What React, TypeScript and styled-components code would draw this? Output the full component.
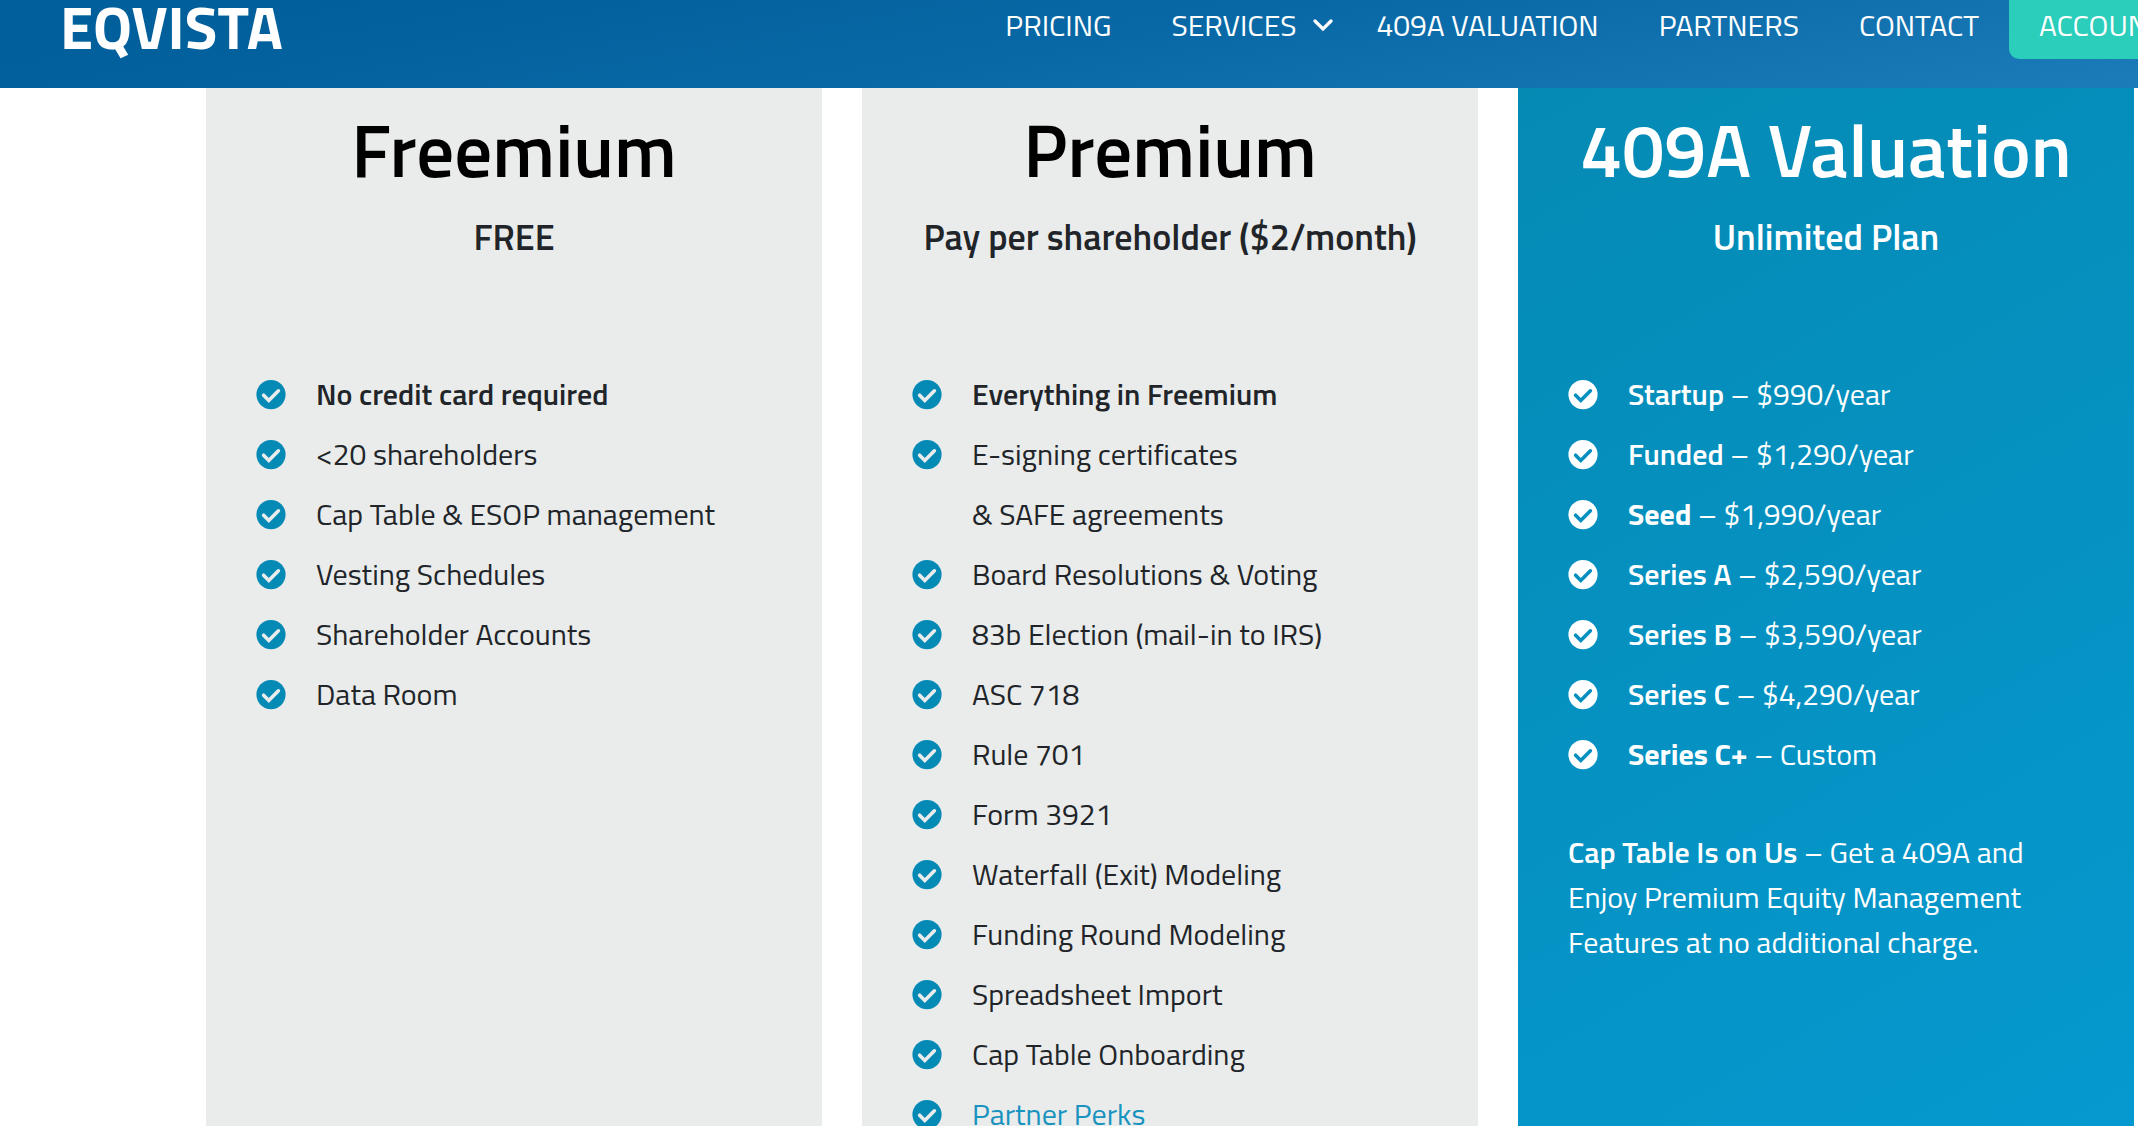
import React from "react";
import styled, { createGlobalStyle } from "styled-components";

const GlobalStyle = createGlobalStyle`
  *, *::before, *::after { box-sizing: border-box; }
  body {
    margin: 0;
    background: #fff;
    color: #212529;
    font-family: "Titillium Web", Lato, "Liberation Sans", sans-serif;
    font-size: 30px;
    line-height: 60px;
  }
  h2, h3, p, ul { margin: 0; padding: 0; }
  a { color: inherit; text-decoration: none; }
  strong { font-weight: 600; }
  b { font-weight: 700; }
`;

const Page = styled.div`
  height: 100vh;
  overflow: hidden;
  display: flex;
  flex-direction: column;
`;

const Header = styled.header`
  flex: none;
  height: 88px;
  padding-left: 60px;
  display: flex;
  justify-content: space-between;
  align-items: flex-start;
  overflow: hidden;
  color: #fff;
  background: linear-gradient(170deg, #015f9b 12%, #0868a5 50%, #1c7cba 100%);
`;

const Logo = styled.a`
  font-size: 60px;
  line-height: 54px;
  font-weight: 700;
`;

const Nav = styled.nav`
  display: flex;
  align-items: flex-start;
  line-height: 50px;
  white-space: nowrap;
`;

const NavLink = styled.a<{ $menu?: boolean }>`
  display: flex;
  align-items: center;
  gap: 17px;
  padding: 0 ${(p) => (p.$menu ? 13 : 30)}px 0 30px;
`;

const AccountLink = styled.a`
  width: 129px;
  height: 59px;
  padding-left: 30px;
  overflow: hidden;
  border-bottom-left-radius: 10px;
  background: #2bcdbb;
`;

const Plans = styled.main`
  flex: 1;
  min-height: 0;
  display: grid;
  grid-template-columns: repeat(3, minmax(0, 1fr));
  gap: 40px;
  padding: 0 4px 0 206px;
`;

const Card = styled.section<{ $featured?: boolean }>`
  padding: 16px 50px 0;
  overflow: hidden;
  color: ${(p) => (p.$featured ? "#fff" : "#212529")};
  background: ${(p) =>
    p.$featured ? "linear-gradient(150deg, #058ab4 0%, #0599cf 100%)" : "#eaeceb"};
  --heading: ${(p) => (p.$featured ? "#fff" : "#000")};
  --icon: ${(p) => (p.$featured ? "#fff" : "#058ab6")};
  --tick: ${(p) => (p.$featured ? "#058fbf" : "#eaeceb")};
`;

const Title = styled.h2`
  color: var(--heading);
  font-size: 75px;
  line-height: 90px;
  font-weight: 600;
  text-align: center;
  white-space: nowrap;
`;

const Price = styled.h3`
  margin: 5px 0 90px;
  font-size: 36px;
  line-height: 75px;
  font-weight: 600;
  text-align: center;
  white-space: nowrap;
`;

const Features = styled.ul`
  list-style: none;
`;

const Feature = styled.li`
  display: flex;
  gap: 30px;
  white-space: nowrap;

  svg { flex: none; margin-top: 16px; }
`;

const PerksLink = styled.a`
  && { color: #1893c0; }
`;

const Note = styled.p`
  margin-top: 46px;
  line-height: 45px;
`;

const Check = () => (
  <svg width="30" height="30" viewBox="0 0 30 30" aria-hidden="true">
    <circle cx="15" cy="14.6" r="14.6" fill="var(--icon)" />
    <path d="M7.6 15.2 12.8 20.4 22.4 10.8" fill="none" stroke="var(--tick)" strokeWidth="3.6" strokeLinecap="round" />
  </svg>
);

const Chevron = () => (
  <svg width="20" height="14" viewBox="0 0 20 14" aria-hidden="true">
    <path d="M2 3 10 11 18 3" fill="none" stroke="#fff" strokeWidth="3.2" strokeLinecap="round" />
  </svg>
);

const freemium = ["<20 shareholders", "Cap Table & ESOP management", "Vesting Schedules", "Shareholder Accounts", "Data Room"];

const premium = [
  "Board Resolutions & Voting",
  "83b Election (mail-in to IRS)",
  "ASC 718",
  "Rule 701",
  "Form 3921",
  "Waterfall (Exit) Modeling",
  "Funding Round Modeling",
  "Spreadsheet Import",
  "Cap Table Onboarding",
];

const valuations = [
  { stage: "Startup", price: "$990/year" },
  { stage: "Funded", price: "$1,290/year" },
  { stage: "Seed", price: "$1,990/year", heavy: true },
  { stage: "Series A", price: "$2,590/year" },
  { stage: "Series B", price: "$3,590/year" },
  { stage: "Series C", price: "$4,290/year" },
  { stage: "Series C+", price: "Custom", heavy: true },
];

const Item = ({ children }: { children: React.ReactNode }) => (
  <Feature>
    <Check />
    <span>{children}</span>
  </Feature>
);

export default function App() {
  return (
    <Page>
      <GlobalStyle />
      <Header>
        <Logo href="#">EQVISTA</Logo>
        <Nav>
          <NavLink href="#pricing">PRICING</NavLink>
          <NavLink href="#services" $menu>SERVICES <Chevron /></NavLink>
          <NavLink href="#409a">409A VALUATION</NavLink>
          <NavLink href="#partners">PARTNERS</NavLink>
          <NavLink href="#contact">CONTACT</NavLink>
          <AccountLink href="#account">ACCOUNT</AccountLink>
        </Nav>
      </Header>
      <Plans>
        <Card>
          <Title>Freemium</Title>
          <Price>FREE</Price>
          <Features>
            <Item><strong>No credit card required</strong></Item>
            {freemium.map((text) => <Item key={text}>{text}</Item>)}
          </Features>
        </Card>
        <Card>
          <Title>Premium</Title>
          <Price>Pay per shareholder ($2/month)</Price>
          <Features>
            <Item><strong>Everything in Freemium</strong></Item>
            <Item>E-signing certificates<br />&amp; SAFE agreements</Item>
            {premium.map((text) => <Item key={text}>{text}</Item>)}
            <Item><PerksLink href="#perks">Partner Perks</PerksLink></Item>
          </Features>
        </Card>
        <Card $featured>
          <Title>409A Valuation</Title>
          <Price>Unlimited Plan</Price>
          <Features>
            {valuations.map(({ stage, price, heavy }) => (
              <Item key={stage}>{heavy ? <b>{stage}</b> : <strong>{stage}</strong>} – {price}</Item>
            ))}
          </Features>
          <Note>
            <strong>Cap Table Is on Us</strong> – Get a 409A and Enjoy Premium Equity Management Features at no additional charge.
          </Note>
        </Card>
      </Plans>
    </Page>
  );
}
